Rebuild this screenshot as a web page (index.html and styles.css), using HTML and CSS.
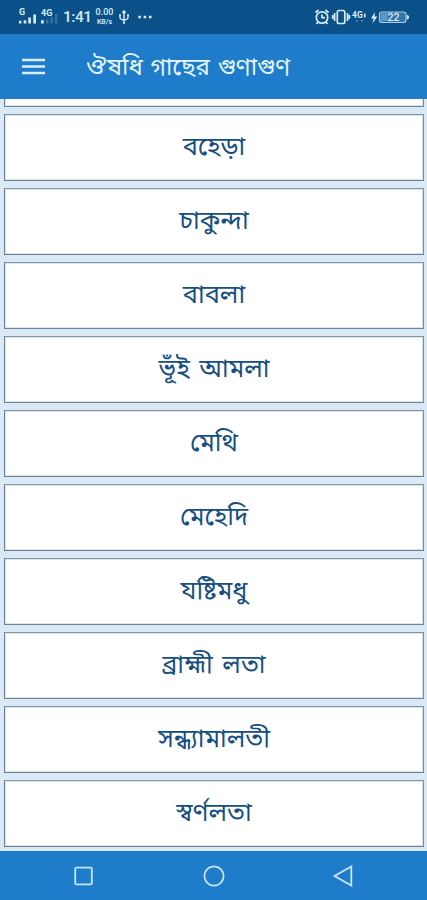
FILE: index.html
```html
<!DOCTYPE html>
<html lang="bn">
<head>
<meta charset="utf-8">
<title>ঔষধি গাছের গুণাগুণ</title>
<link rel="stylesheet" href="styles.css">
</head>
<body>
<div class="screen">
  <div class="status">
    <svg class="signal" viewBox="0 0 42 24" width="42" height="24">
      <text class="net" x="0" y="9.500">G</text>
      <path d="M0 15.800h2.400v2.700H0zM4.700 15.300h2.600v3.200H4.700zM9.300 12.500h2.600v6H9.300zM14.300 9.500h2.700v9h-2.700z"/>
      <text class="net" x="22" y="10.500">4G</text>
      <path d="M22 15.300h2.800v3.200H22z"/>
      <path class="faint" d="M27 14.500h2.300v4H27zM31.500 12h2.300v6.500h-2.300zM36 9h2.300v9.500H36z"/>
    </svg>
    <span class="time">1:41</span>
    <span class="rate"><span>0.00</span><span>KB/s</span></span>
    <svg class="usb" viewBox="0 0 12 16" width="12" height="16">
      <path d="M6 2v12M2 6v2.500q0 2 4 2.500M10 6v2.500q0 2-4 2.500M4.500 4 6 2l1.500 2"/>
      <path d="M1 6h2M9 6h2M5 14h2"/>
    </svg>
    <svg class="more" viewBox="0 0 14 4" width="14" height="4"><path d="M.3 .8h2.600v2.400H.3zM5.600 .8h2.600v2.400H5.600zM10.900 .8h2.600v2.400h-2.600z"/></svg>
    <span class="spacer"></span>
    <svg class="tray" viewBox="0 0 98 20" width="98" height="20">
      <g class="line">
        <circle cx="7" cy="10.500" r="5.700"/>
        <path d="M7 7.500v3.200h3M.5 5.500 3.500 3M13.500 5.500 10.500 3M3 15 1.500 17M11 15l1.500 2"/>
        <rect x="22.300" y="3.500" width="7.500" height="13" rx="1.800"/>
        <path d="M19.600 6v8M32.500 6v8M17.700 8v4M34.400 8v4"/>
      </g>
      <text class="lte" x="37" y="10.500">4G</text>
      <path d="M49 6.500h1.500v4H49z"/>
      <path class="dim" d="M41 13h2v1.500h-2zM46 13h2v1.500h-2z"/>
      <path d="M60 5 56 11.500h2.700L57.500 16.500l4.800-7h-2.800z"/>
      <rect class="cell" x="64.500" y="5" width="26.500" height="10.500" rx="2.500"/>
      <path class="charge" d="M66 6.500h6.500v7.500H66z"/>
      <path d="M92 8q2 0 2 2.300t-2 2.300z"/>
      <text class="pct" x="78.500" y="14" text-anchor="middle">22</text>
    </svg>
  </div>
  <header class="bar">
    <svg class="menu" viewBox="0 0 23 17" width="23" height="17"><path d="M0 .7h23v2.600H0zM0 7.200h23v2.600H0zM0 13.700h23v2.600H0z"/></svg>
    <h1 class="title">ঔষধি গাছের গুণাগুণ</h1>
  </header>
  <main class="list">
    <div class="card"></div>
    <div class="card">বহেড়া</div>
    <div class="card">চাকুন্দা</div>
    <div class="card">বাবলা</div>
    <div class="card">ভূঁই আমলা</div>
    <div class="card">মেথি</div>
    <div class="card">মেহেদি</div>
    <div class="card">যষ্টিমধু</div>
    <div class="card">ব্রাহ্মী লতা</div>
    <div class="card">সন্ধ্যামালতী</div>
    <div class="card">স্বর্ণলতা</div>
  </main>
  <nav class="nav">
    <svg viewBox="0 0 22 22" width="22" height="22"><rect x="2.200" y="2.700" width="16.600" height="16.600" rx="1"/></svg>
    <svg viewBox="0 0 22 22" width="22" height="22"><circle cx="11" cy="11" r="9.600"/></svg>
    <svg viewBox="0 0 22 22" width="22" height="22"><path d="M18.300 1.500v19L1.500 11z"/></svg>
  </nav>
</div>
</body>
</html>
```
FILE: styles.css
```css
* { box-sizing: border-box; }
body { margin: 0; font-family: "Noto Sans Bengali", "Noto Sans", sans-serif; }
.screen {
  width: 427px;
  height: 900px;
  display: flex;
  flex-direction: column;
  overflow: hidden;
  background: #dbe9f6;
}
.status {
  flex: none;
  height: 34px;
  padding: 0 14px 0 19px;
  display: flex;
  align-items: center;
  background: #0a518a;
  color: #d9ecfa;
  fill: #d9ecfa;
  font-family: Roboto, sans-serif;
}
.signal { flex: none; }
.net { font-size: 9px; font-weight: 700; }
.faint { opacity: .22; }
.time { margin-left: 2px; width: 29px; font-size: 15.500px; letter-spacing: -.5px; font-weight: 500; }
.rate {
  margin-left: 3px;
  width: 19px;
  display: flex;
  flex-direction: column;
  align-items: center;
  font-size: 9px;
  line-height: 10px;
  font-weight: 500;
}
.rate span + span { font-size: 7px; }
.usb { margin-left: 4px; fill: none; stroke: #d9ecfa; stroke-width: 1.400; }
.more { margin-left: 8px; }
.spacer { flex: 1; }
.tray .line { fill: none; stroke: #d9ecfa; stroke-width: 1.700; }
.tray .dim { opacity: .4; }
.tray .cell { fill: #3474a6; stroke: #a9cbe6; stroke-width: 1.200; }
.tray .charge { fill: #6297c2; }
.lte { font-size: 8.500px; font-weight: 700; }
.pct { font-size: 10.500px; font-weight: 500; }
.bar {
  flex: none;
  height: 65px;
  padding-left: 22px;
  display: flex;
  align-items: center;
  background: #1e7ccb;
  color: #e4f4ff;
}
.menu { fill: #d9effd; }
.title { margin: 5px 0 0 41px; font-size: 24px; line-height: 40px; font-weight: 400; white-space: nowrap; word-spacing: 1.500px; }
.list {
  flex: none;
  height: 752px;
  padding: 0 3px 4px 4px;
  display: flex;
  flex-direction: column;
  justify-content: flex-end;
  gap: 7px;
  overflow: hidden;
}
.card {
  flex: none;
  height: 67px;
  padding-top: 3px;
  display: flex;
  align-items: center;
  justify-content: center;
  border-style: solid;
  border-width: 1px;
  border-color: #7f95a8 #768c9f #6b8296 #687f93;
  box-shadow: inset 0 0 0 1px #dde4ea;
  background: #fff;
  color: #154e83;
  font-size: 25.400px;
  line-height: 40px;
  word-spacing: 3px;
}
.nav {
  flex: none;
  height: 49px;
  padding: 0 72px 0 73px;
  display: flex;
  align-items: center;
  justify-content: space-between;
  background: #1e7ccb;
  fill: none;
  stroke: #c5e6fb;
  stroke-width: 1.800;
}
```
